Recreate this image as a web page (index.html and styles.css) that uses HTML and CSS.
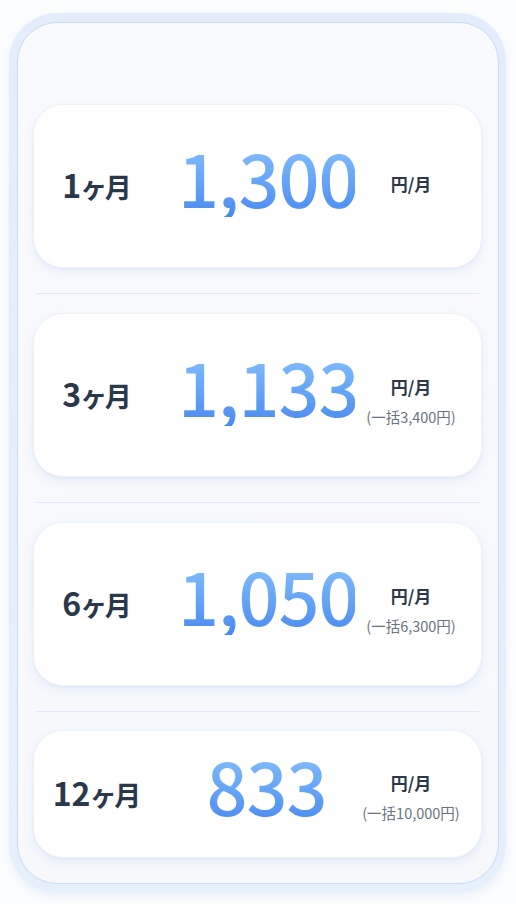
FILE: index.html
```html
<!DOCTYPE html>
<html lang="ja">
<head>
<meta charset="utf-8">
<title>料金プラン</title>
<link rel="stylesheet" href="styles.css">
</head>
<body>
<div class="frame">
  <div class="panel">
    <div class="plan">
      <div class="label"><span class="n">1</span><span class="jp">ヶ月</span></div>
      <div class="price">1,300</div>
      <div class="unit single"><div class="per">円/月</div></div>
    </div>
    <div class="divider"></div>
    <div class="plan">
      <div class="label"><span class="n">3</span><span class="jp">ヶ月</span></div>
      <div class="price">1,133</div>
      <div class="unit"><div class="per">円/月</div><div class="note">(一括3,400円)</div></div>
    </div>
    <div class="divider"></div>
    <div class="plan">
      <div class="label"><span class="n">6</span><span class="jp">ヶ月</span></div>
      <div class="price">1,050</div>
      <div class="unit"><div class="per">円/月</div><div class="note">(一括6,300円)</div></div>
    </div>
    <div class="divider last"></div>
    <div class="plan short">
      <div class="label"><span class="n">12</span><span class="jp">ヶ月</span></div>
      <div class="price">833</div>
      <div class="unit"><div class="per">円/月</div><div class="note">(一括10,000円)</div></div>
    </div>
  </div>
</div>
</body>
</html>
```
FILE: styles.css
```css
html, body {
  margin: 0;
  padding: 0;
  background: #fcfdfe;
}
body {
  font-family: "Noto Sans CJK JP", "Noto Sans", sans-serif;
  width: 516px;
  height: 904px;
  overflow: hidden;
}
.frame {
  margin: 13px 10px 0 9px;
  height: 880px;
  box-sizing: border-box;
  padding: 9px 7px 9px 8px;
  border-radius: 48px;
  background: linear-gradient(180deg, #e3edfc 0%, #e6effc 100%);
  box-shadow: 0 4px 10px rgba(150, 185, 235, 0.18);
}
.panel {
  height: 862px;
  box-sizing: border-box;
  border: 1.5px solid #c9dbf6;
  border-radius: 40px;
  background: linear-gradient(180deg, #f9fafd 0%, #f6f8fc 100%);
  padding: 81px 16px 0 15px;
}
.plan {
  height: 164px;
  box-sizing: border-box;
  background: #ffffff;
  border: 1px solid #eef3fa;
  border-radius: 30px;
  box-shadow: 0 4px 10px rgba(110, 155, 225, 0.13), 0 1px 2px rgba(110, 155, 225, 0.08);
  display: grid;
  grid-template-columns: 126px minmax(0, 1fr) 112px;
  padding-right: 14px;
  align-items: center;
}
.plan.short {
  height: 128px;
}
.divider {
  height: 1px;
  background: #dfe9f7;
  margin: 25px 3px 19px;
}
.divider.last {
  margin-bottom: 18px;
}
.label {
  justify-self: center;
  color: #2b3849;
  font-weight: 700;
  white-space: nowrap;
  margin-bottom: 4px;
}
.label .n {
  font-size: 32px;
}
.label .jp {
  font-size: 27px;
  font-feature-settings: "palt";
  margin-left: 1px;
}
.price {
  justify-self: stretch;
  text-align: center;
  padding-left: 18px;
  font-weight: 500;
  font-size: 72px;
  line-height: 80px;
  letter-spacing: -1px;
  margin-bottom: 18px;
  background: linear-gradient(180deg, #8cc3fd 0%, #66a5f6 55%, #4b8aee 100%);
  -webkit-background-clip: text;
  background-clip: text;
  color: transparent;
  white-space: nowrap;
}
.unit {
  justify-self: center;
  display: flex;
  flex-direction: column;
  align-items: center;
  margin-top: 12px;
}
.unit.single {
  margin-top: -4px;
}
.plan.short .unit {
  margin-top: 6px;
}
.per {
  font-size: 17px;
  line-height: 24px;
  font-weight: 700;
  color: #2b3849;
}
.note {
  margin-top: 8px;
  font-size: 14.5px;
  line-height: 20px;
  color: #6a7380;
  white-space: nowrap;
}
```
